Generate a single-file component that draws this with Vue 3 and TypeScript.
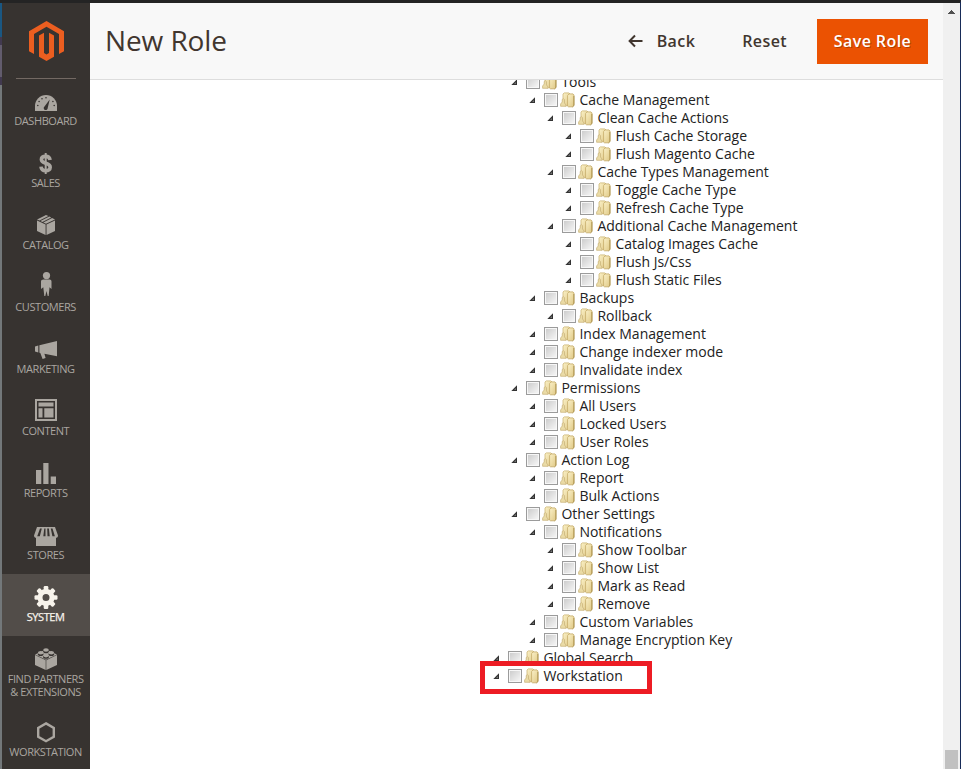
<script setup lang="ts">
interface MenuItem {
  id: string
  lines: string[]
  active?: boolean
}

interface ResourceNode {
  level: number
  label: string
}

const menu: MenuItem[] = [
  { id: 'dashboard', lines: ['Dashboard'] },
  { id: 'sales', lines: ['Sales'] },
  { id: 'catalog', lines: ['Catalog'] },
  { id: 'customers', lines: ['Customers'] },
  { id: 'marketing', lines: ['Marketing'] },
  { id: 'content', lines: ['Content'] },
  { id: 'reports', lines: ['Reports'] },
  { id: 'stores', lines: ['Stores'] },
  { id: 'system', lines: ['System'], active: true },
  { id: 'partners', lines: ['Find Partners', '& Extensions'] },
  { id: 'workstation', lines: ['Workstation'] },
]

const resources: ResourceNode[] = [
  { level: 1, label: 'Tools' },
  { level: 2, label: 'Cache Management' },
  { level: 3, label: 'Clean Cache Actions' },
  { level: 4, label: 'Flush Cache Storage' },
  { level: 4, label: 'Flush Magento Cache' },
  { level: 3, label: 'Cache Types Management' },
  { level: 4, label: 'Toggle Cache Type' },
  { level: 4, label: 'Refresh Cache Type' },
  { level: 3, label: 'Additional Cache Management' },
  { level: 4, label: 'Catalog Images Cache' },
  { level: 4, label: 'Flush Js/Css' },
  { level: 4, label: 'Flush Static Files' },
  { level: 2, label: 'Backups' },
  { level: 3, label: 'Rollback' },
  { level: 2, label: 'Index Management' },
  { level: 2, label: 'Change indexer mode' },
  { level: 2, label: 'Invalidate index' },
  { level: 1, label: 'Permissions' },
  { level: 2, label: 'All Users' },
  { level: 2, label: 'Locked Users' },
  { level: 2, label: 'User Roles' },
  { level: 1, label: 'Action Log' },
  { level: 2, label: 'Report' },
  { level: 2, label: 'Bulk Actions' },
  { level: 1, label: 'Other Settings' },
  { level: 2, label: 'Notifications' },
  { level: 3, label: 'Show Toolbar' },
  { level: 3, label: 'Show List' },
  { level: 3, label: 'Mark as Read' },
  { level: 3, label: 'Remove' },
  { level: 2, label: 'Custom Variables' },
  { level: 2, label: 'Manage Encryption Key' },
  { level: 0, label: 'Global Search' },
  { level: 0, label: 'Workstation' },
]
</script>

<template>
  <div class="window">
    <div class="edge-left"></div>
    <aside class="sidebar">
      <div class="brand">
        <svg class="logo" width="35" height="40" viewBox="0 0 35 40">
          <path d="M17.5 0 35 10.2V30.2L30 33V13L17.5 5.8 5 13V33L0 30.2V10.2Z" />
          <path d="M10 14.5 15 11.7V32.1L17.5 33.6 20 32.1V11.7L25 14.5V35.7L17.5 40 10 35.7Z" />
        </svg>
      </div>
      <nav>
        <a v-for="item in menu" :key="item.id" class="menu-item" :class="{ active: item.active, tall: item.lines.length > 1 }">
          <svg class="menu-icon" width="28" height="28" viewBox="0 0 28 28">
            <g v-if="item.id === 'dashboard'">
              <path d="M3 21V16a11 11 0 0 1 22 0v5Z" />
              <path class="cut" d="m12.5 16.5 5.2-7-2 8.5a2 2 0 1 1-3.2-1.5Z" />
              <g class="cut">
                <circle cx="5.8" cy="15.5" r=".8" /><circle cx="7.1" cy="11.5" r=".8" />
                <circle cx="10" cy="8.8" r=".8" /><circle cx="14" cy="7.7" r=".8" />
                <circle cx="20.9" cy="11.5" r=".8" /><circle cx="22.2" cy="15.5" r=".8" />
              </g>
            </g>
            <g v-else-if="item.id === 'sales'">
              <path class="line" stroke-width="3.6" d="M18.1 8.1C17.7 5.5 16 4.4 13.7 4.4 11 4.4 9.4 5.7 9.4 7.6c0 5 8.8 2.5 8.8 7.6 0 2.2-1.8 3.6-4.4 3.6-2.9 0-4.6-1.5-4.8-4.1" />
              <path class="line" stroke-width="2" d="M13.7 1v21" />
            </g>
            <g v-else-if="item.id === 'catalog'">
              <path d="m14 1 2.4 1.1L7.5 6.600 5 5.400ZM17.300 2.500 19.200 3.400l-8.800 4.600-2-.9ZM20.100 3.900 23 5.400l-9 4.400-2.700-1.300ZM5 6.400l8.600 4.200V21L5 17ZM23 6.400l-8.500 4.200V21L23 17Z" />
            </g>
            <g v-else-if="item.id === 'customers'">
              <circle cx="14.5" cy="-.4" r="3.6" />
              <path d="M11.5 3.5h6c1.3 0 2 .8 2 2v7.5l-2-1.8-.8 8.8h-1l-1.200-5-1.200 5h-1l-1-8.800L9 13V5.500c0-1.200.9-2 2.500-2Z" />
            </g>
            <g v-else-if="item.id === 'marketing'">
              <path d="M3 8.500 6.300 7.500v7L3 13.500ZM7.400 7.200 25 3v15.200l-12.600-2.500 1.200 4.200-3 1-2.300-6-.9-.2Z" />
            </g>
            <g v-else-if="item.id === 'content'">
              <path fill-rule="evenodd" d="M3-1h22v22H3ZM5 1v18h18V1ZM6.500 2.500h15v4h-15ZM6.500 8.300h4v9.200h-4ZM12.300 8.300h9.200v9.200h-9.200Z" />
            </g>
            <g v-else-if="item.id === 'reports'">
              <path d="M4 8h5.300v14H4ZM11.300 1h5.200v21h-5.200ZM18.700 14.600H24V22h-5.300Z" />
            </g>
            <g v-else-if="item.id === 'stores'">
              <path d="M5 3h18l3 8.500c0 2-1.500 2.300-2 2.300V22H4v-8.200c-.8 0-2-.5-2-2.300Z" />
              <path class="cut" d="m8 4.500-2.800 7.800h2.600l2-7.800ZM12.300 4.500l-1 7.800h2.200V4.500ZM15.200 4.500l.3 7.800h2.200l-.8-7.800ZM18.800 4.500l1.600 7.800h2.500l-2.400-7.800Z" />
            </g>
            <g v-else-if="item.id === 'system'">
              <circle class="line" cx="14" cy="11.500" r="6" stroke-width="5" />
              <rect v-for="n in 8" :key="n" x="11.700" y="0" width="4.600" height="5" rx="1.200" :transform="`rotate(${n * 45} 14 11.5)`" />
            </g>
            <g v-else-if="item.id === 'partners'">
              <path d="m14 1.500 11 5-11 5.200L3 6.500ZM3 7l10.700 5.200V22L3 17ZM25 7l-10.700 5.200V22L25 17Z" />
              <g class="cut">
                <ellipse cx="14" cy="3.400" rx="2.900" ry="1.800" /><ellipse cx="8.700" cy="6.200" rx="2.900" ry="1.800" />
                <ellipse cx="19.300" cy="6.200" rx="2.900" ry="1.800" /><ellipse cx="14" cy="9" rx="2.900" ry="1.800" />
              </g>
              <ellipse cx="14" cy="2" rx="2.800" ry="1.800" /><ellipse cx="8.700" cy="4.800" rx="2.800" ry="1.800" />
              <ellipse cx="19.300" cy="4.800" rx="2.800" ry="1.800" /><ellipse cx="14" cy="7.600" rx="2.800" ry="1.800" />
            </g>
            <path v-else class="line" stroke-width="2.400" d="M14 1.400 21.800 5.900v8.800L14 19.200 6.200 14.700V5.900Z" />
          </svg>
          <span v-for="line in item.lines" :key="line" class="menu-label">{{ line }}</span>
        </a>
      </nav>
    </aside>
    <main class="page">
      <header class="page-header">
        <h1>New Role</h1>
        <button class="action back">
          <svg width="15" height="14" viewBox="0 0 15 14"><path d="M7 1.500 1.600 7 7 12.500M1.600 7H14.500" /></svg>
          <span>Back</span>
        </button>
        <button class="action reset">Reset</button>
        <button class="action primary">Save Role</button>
      </header>
      <section class="tree-pane">
        <ul class="tree">
          <li v-for="node in resources" :key="node.label" :style="{ paddingLeft: `${node.level * 18}px` }">
            <svg class="glyphs" width="50" height="18" viewBox="0 0 50 18">
              <defs>
                <linearGradient id="box" x1="0" y1="0" x2="1" y2="1"><stop offset="0" stop-color="#cdcdcd" /><stop offset="1" stop-color="#f5f5f5" /></linearGradient>
                <linearGradient id="folder" x1="0" y1="0" x2="1" y2="1"><stop offset="0" stop-color="#fbf1c8" /><stop offset="1" stop-color="#dfc885" /></linearGradient>
              </defs>
              <path d="M.3 12H6V6.300Z" fill="#333" />
              <path d="M3 11H5V9Z" fill="#777" />
              <rect x="15.500" y="2.500" width="13" height="13" fill="#f7f7f7" stroke="#9b9b9b" />
              <rect x="17" y="4" width="10" height="10" fill="url(#box)" />
              <path d="M34 14.500V3L35.200 1.900h4.600L41 3v12Z" fill="url(#folder)" stroke="#cdb677" stroke-width=".8" />
              <path d="M38.600 15V4.500L40 2.900h4L45 4v10.500l-1.500 1.300h-4Z" fill="url(#folder)" stroke="#c4aa67" stroke-width=".8" />
              <path d="M31.600 15.300V13l1.600-2V8.500l1.300-.8 1 1V12l1.500 2v1.300Z" fill="#eadba6" stroke="#c7b077" stroke-width=".7" />
              <path d="M44.900 5v9.500l-1.400 1.300" fill="none" stroke="#a98e4a" stroke-width=".9" />
            </svg>
            <span>{{ node.label }}</span>
          </li>
        </ul>
      </section>
    </main>
    <div class="scrollbar">
      <svg width="7" height="4" viewBox="0 0 7 4"><path d="M3 0h1v1h1v1h1v1h1v1H0V3h1V2h1V1h1Z" /></svg>
      <div class="thumb"></div>
    </div>
    <div class="highlight"></div>
  </div>
</template>

<style>
body {
  overflow: hidden;
}
</style>

<style scoped>
.window {
  position: relative;
  box-sizing: border-box;
  display: grid;
  grid-template-columns: 2px 88px 1fr 17px;
  width: 961px;
  height: 769px;
  border-top: 3px solid #242424;
  border-right: 1px solid #172b58;
  overflow: hidden;
  background: #fff;
  font-family: 'Open Sans', 'Noto Sans', sans-serif;
}
.edge-left {
  background: linear-gradient(#1a5782 34px, #41394f 34px, #41394f 42px, #625c6d 42px, #625c6d 74px, #41394f 74px, #41394f 82px, #73787a 82px);
}
.sidebar {
  height: 766px;
  overflow: hidden;
  background: #373330;
}
.brand {
  box-sizing: border-box;
  height: 75px;
  padding: 17.5px 0 0 27px;
}
.logo {
  display: block;
  fill: #eb5e20;
}
nav::before {
  content: '';
  display: block;
  height: 1px;
  margin: 0 14px -1px;
  background: #736963;
}
.menu-item {
  display: flex;
  flex-direction: column;
  align-items: center;
  box-sizing: border-box;
  height: 62px;
  padding-top: 12px;
  color: #aaa6a0;
  --surface: #373330;
}
.menu-item.tall {
  height: 74px;
}
.menu-item.active {
  background: #524d49;
  color: #f7f3eb;
  --surface: #524d49;
}
.menu-item:last-child .menu-icon {
  margin-bottom: -5px;
}
.menu-icon {
  flex: none;
  margin-bottom: -4px;
  overflow: visible;
  fill: currentColor;
}
.menu-icon .cut {
  fill: var(--surface);
}
.menu-icon .line {
  fill: none;
  stroke: currentColor;
}
.menu-label {
  margin-right: 0.8px;
  font-size: 11px;
  line-height: 13px;
  letter-spacing: -0.43px;
  white-space: nowrap;
  text-transform: uppercase;
}
.active .menu-label {
  -webkit-text-stroke: 0.25px currentColor;
}
.page {
  display: flex;
  flex-direction: column;
  height: 766px;
  min-width: 0;
}
.page-header {
  flex: none;
  display: flex;
  align-items: center;
  box-sizing: border-box;
  height: 77px;
  padding: 0 15px;
  border-bottom: 1px solid #ddd;
  background: #f8f8f8;
}
h1 {
  margin: -2px auto 0 0;
  color: #41362f;
  font-size: 28px;
  font-weight: 400;
  line-height: 38px;
  letter-spacing: -0.1px;
}
.action {
  display: flex;
  align-items: center;
  padding: 0;
  border: 0;
  background: none;
  color: #41362f;
  font: 600 16px/24px 'Open Sans', 'Noto Sans', sans-serif;
  letter-spacing: 0.4px;
  white-space: nowrap;
}
.back {
  gap: 14px;
  margin-right: 47px;
}
.back svg {
  fill: none;
  stroke: #41362f;
  stroke-width: 2;
}
.reset {
  margin-right: 30px;
}
.primary {
  justify-content: center;
  width: 111px;
  height: 45px;
  background: #eb5202;
  color: #fff;
  text-shadow: 1px 1px 0 rgba(0, 0, 0, 0.25);
}
.tree-pane {
  flex: 1;
  min-height: 0;
  overflow: hidden;
}
.tree {
  margin: -7px 0 0;
  padding: 0 0 0 403px;
  list-style: none;
}
.tree li {
  display: flex;
  height: 18px;
  color: #222;
  font-size: 14px;
  line-height: 18px;
  white-space: nowrap;
}
.glyphs {
  flex: none;
  margin-right: 0.4px;
}
.scrollbar {
  display: flex;
  flex-direction: column;
  align-items: center;
  height: 766px;
  background: #f0f0f0;
}
.scrollbar svg {
  margin-top: 7px;
  fill: #505050;
}
.thumb {
  width: 13px;
  height: 19px;
  margin-top: auto;
  background: #c1c1c1;
}
.highlight {
  position: absolute;
  box-sizing: border-box;
  top: 658px;
  left: 480px;
  width: 172px;
  height: 33px;
  border: 5px solid #ed1c24;
}
</style>
